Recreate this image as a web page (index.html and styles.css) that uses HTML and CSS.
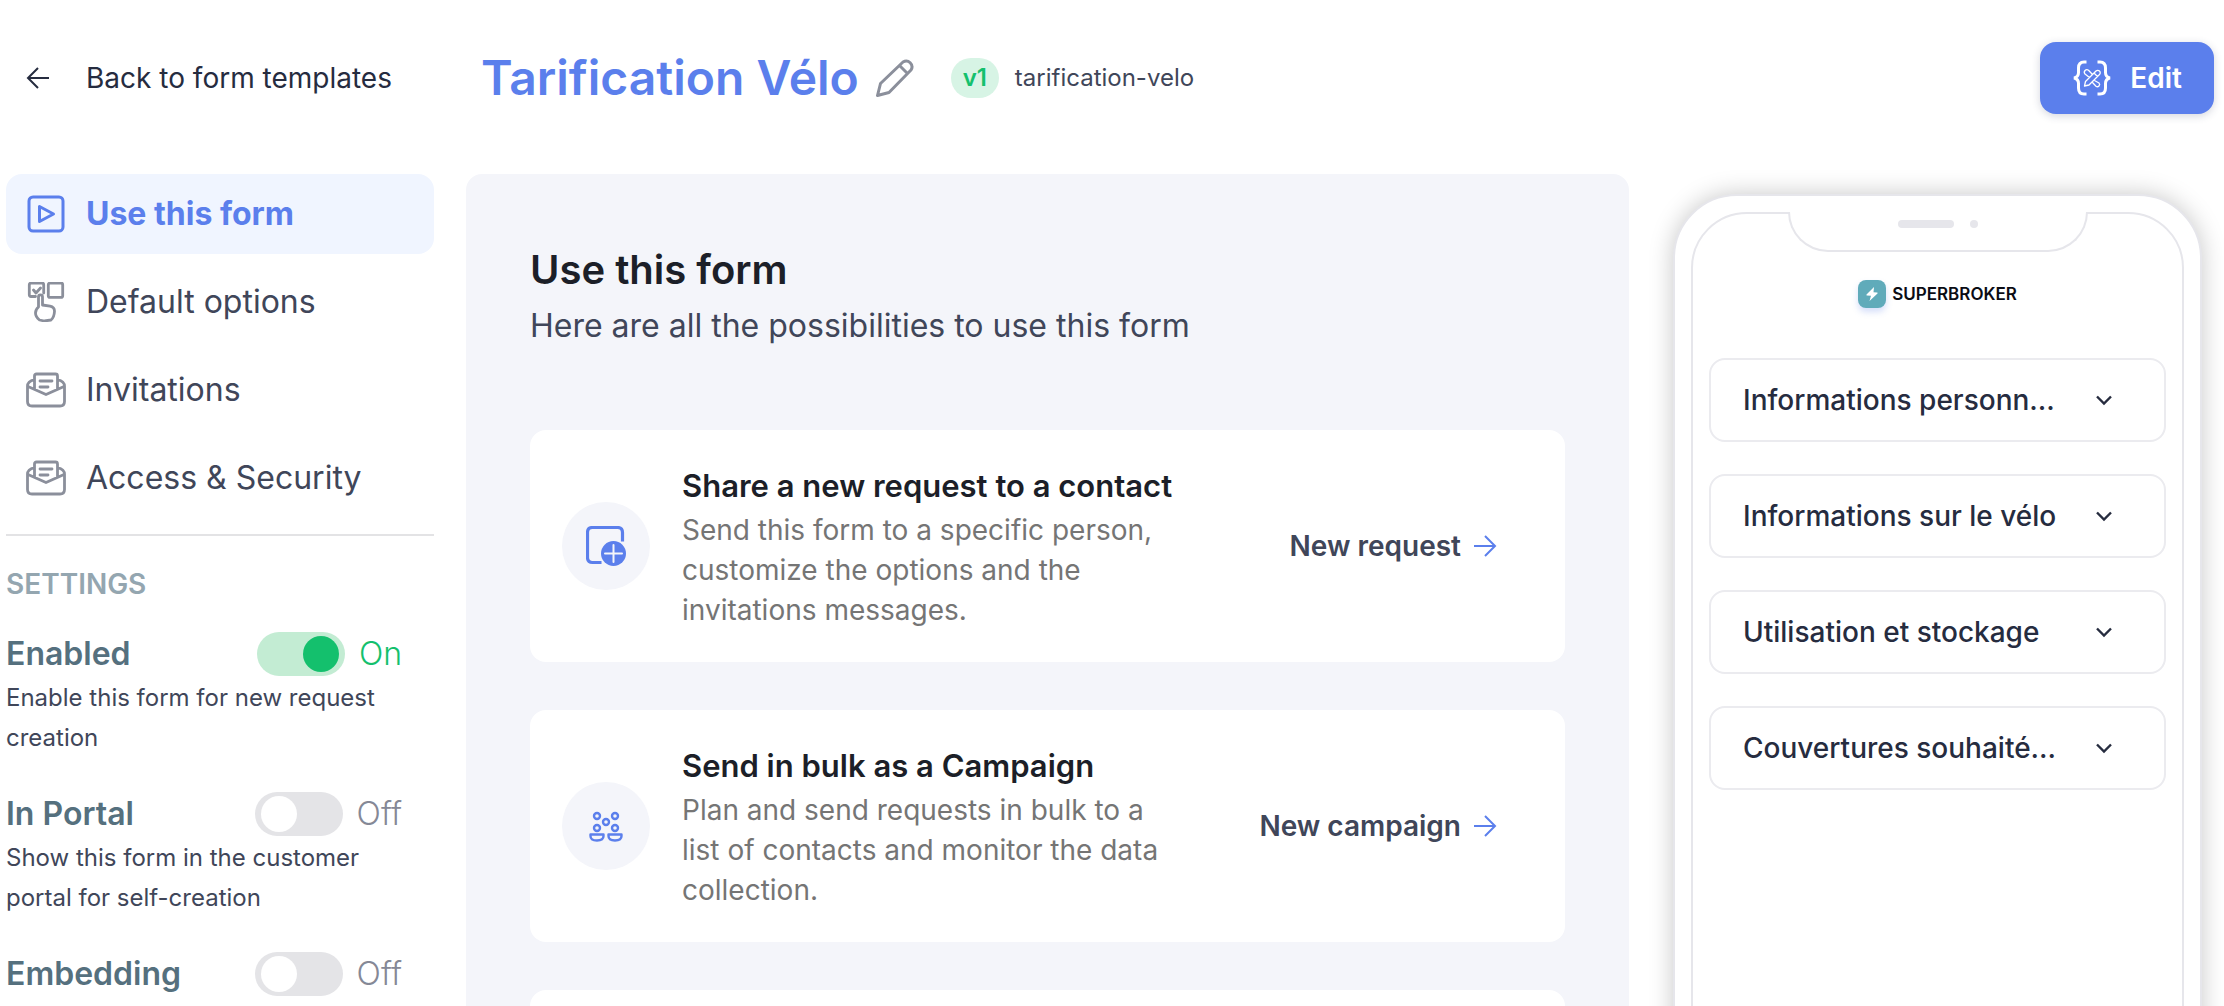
FILE: index.html
```html
<!DOCTYPE html>
<html lang="en">
<head>
<meta charset="utf-8">
<title>Tarification Vélo</title>
<link rel="stylesheet" href="styles.css">
</head>
<body>
<div class="app">
  <header class="header">
    <a class="back" href="#">
      <svg class="back-icon" viewBox="0 0 24 24" fill="none" stroke="currentColor" stroke-width="2"><path d="M23 12H2M12 2 2 12l10 10"/></svg>
      <span>Back to form templates</span>
    </a>
    <div class="heading">
      <h1>Tarification Vélo</h1>
      <button class="rename" aria-label="Rename">
        <svg viewBox="0 0 40 40" fill="none" stroke="currentColor" stroke-width="3" stroke-linejoin="round"><path d="M2.500 37.500 5.500 25.500 28 4a5.800 5.800 0 0 1 8 8L14 34.500ZM24.500 7.500l8 8"/></svg>
      </button>
      <span class="version">v1</span>
      <span class="slug">tarification-velo</span>
    </div>
    <button class="edit">
      <svg viewBox="0 0 40 36" fill="none" stroke="currentColor" stroke-width="3"><path d="M14.500 2H12Q6.500 2 6.500 8v4.500Q6.500 17 2 18q4.500 1 4.500 5.500V28q0 6 5.500 6h2.500M25.500 2H28q5.500 0 5.500 6v4.500Q33.500 17 38 18q-4.500 1-4.500 5.500V28q0 6-5.500 6h-2.500"/><path stroke-width="1.300" stroke-linejoin="round" d="m12.500 26 1-4.500L24 11a2.400 2.400 0 0 1 3.500 3.500L17 25ZM22 13l3.500 3.500M17.500 17.500l-4.500-3.500a2.600 2.600 0 0 1 3.500-3.800l4 4.300M22.500 20.500l4.500 2.500a2.200 2.200 0 0 1-3 3.200l-3.500-3.700"/></svg>
      <span>Edit</span>
    </button>
  </header>

  <div class="columns">
    <aside class="sidebar">
      <nav class="menu">
        <a class="menu-item active" href="#">
          <svg viewBox="0 0 40 40" fill="none" stroke="currentColor" stroke-width="3" stroke-linejoin="round"><rect x="3" y="3" width="34" height="34" rx="4"/><path d="M13.500 12.500v15L27.500 20Z"/></svg>
          <span>Use this form</span>
        </a>
        <a class="menu-item" href="#">
          <svg viewBox="0 0 40 40" fill="none" stroke="currentColor" stroke-width="2.800" stroke-linejoin="round" stroke-linecap="round"><path d="M9.500 14.500H5a1.700 1.700 0 0 1-1.700-1.700V2.700A1.700 1.700 0 0 1 5 1h11a1.700 1.700 0 0 1 1.700 1.700V11"/><rect x="22.300" y="1" width="14.400" height="14.400" rx="1.700"/><path d="m7.500 8 2.500 3 4.500-5M12.500 25V14.800a2 2 0 0 1 4 0v8.200l7.500 1.200q4.500 1 4.500 5-.3 6-3.500 8.800l-6.500 1-5-1q-4-3-4-7 0-3.500 3-6Z"/></svg>
          <span>Default options</span>
        </a>
        <a class="menu-item" href="#">
          <svg viewBox="0 0 40 40" fill="none" stroke="currentColor" stroke-width="2.800" stroke-linejoin="round" stroke-linecap="round"><path d="M8.500 19V6Q8.500 4 10.500 4h19q2 0 2 2v13M8.500 9.500Q1.500 11.500 1.500 16v15.500q0 4.500 4.500 4.500h28q4.500 0 4.500-4.500V16q0-4.500-7-6.500M2 16.500l18 8 18-8M14 11h12M14 17h8"/></svg>
          <span>Invitations</span>
        </a>
        <a class="menu-item" href="#">
          <svg viewBox="0 0 40 40" fill="none" stroke="currentColor" stroke-width="2.800" stroke-linejoin="round" stroke-linecap="round"><path d="M8.500 19V6Q8.500 4 10.500 4h19q2 0 2 2v13M8.500 9.500Q1.500 11.500 1.500 16v15.500q0 4.500 4.500 4.500h28q4.500 0 4.500-4.500V16q0-4.500-7-6.500M2 16.500l18 8 18-8M14 11h12M14 17h8"/></svg>
          <span>Access &amp; Security</span>
        </a>
      </nav>
      <h2 class="settings-title">SETTINGS</h2>
      <div class="setting">
        <div class="setting-row">
          <label for="enabled">Enabled</label>
          <input class="switch" type="checkbox" id="enabled" checked>
          <span class="state on">On</span>
        </div>
        <p>Enable this form for new request creation</p>
      </div>
      <div class="setting">
        <div class="setting-row">
          <label for="portal">In Portal</label>
          <input class="switch" type="checkbox" id="portal">
          <span class="state">Off</span>
        </div>
        <p>Show this form in the customer portal for self-creation</p>
      </div>
      <div class="setting">
        <div class="setting-row">
          <label for="embedding">Embedding</label>
          <input class="switch" type="checkbox" id="embedding">
          <span class="state">Off</span>
        </div>
      </div>
    </aside>

    <main class="panel">
      <h2>Use this form</h2>
      <p class="subtitle">Here are all the possibilities to use this form</p>
      <section class="card">
        <div class="card-icon">
          <svg viewBox="0 0 40 40" fill="none" stroke="currentColor" stroke-width="3.200"><path d="M15.500 36.500H6.500q-5 0-5-5v-25q0-5 5-5h25q5 0 5 5v9"/><circle cx="27.500" cy="27.500" r="12.500" fill="currentColor" stroke="none"/><path stroke="#f4f5fa" stroke-width="2" stroke-linecap="round" d="M27.500 19v17M19 27.500h17"/></svg>
        </div>
        <div class="card-text">
          <h3>Share a new request to a contact</h3>
          <p>Send this form to a specific person, customize the options and the invitations messages.</p>
        </div>
        <a class="action" href="#">New request
          <svg viewBox="0 0 24 24" fill="none" stroke="currentColor" stroke-width="2"><path d="M1 12h20M12 2l10 10-10 10"/></svg>
        </a>
      </section>
      <section class="card">
        <div class="card-icon">
          <svg viewBox="0 0 40 40" fill="none" stroke="currentColor" stroke-width="2.400"><circle cx="11" cy="10" r="3"/><circle cx="29" cy="10" r="3"/><circle cx="20" cy="16" r="3"/><circle cx="11" cy="22" r="3"/><circle cx="29" cy="22" r="3"/><path stroke-linejoin="round" d="M4.500 28.500h13v1.500q0 4.500-6.500 4.500T4.500 30ZM22.500 28.500h13v1.500q0 4.500-6.500 4.500t-6.500-4.500Z"/></svg>
        </div>
        <div class="card-text">
          <h3>Send in bulk as a Campaign</h3>
          <p>Plan and send requests in bulk to a list of contacts and monitor the data collection.</p>
        </div>
        <a class="action" href="#">New campaign
          <svg viewBox="0 0 24 24" fill="none" stroke="currentColor" stroke-width="2"><path d="M1 12h20M12 2l10 10-10 10"/></svg>
        </a>
      </section>
      <section class="card"></section>
    </main>

    <aside class="preview">
      <div class="phone">
        <div class="notch"><span class="speaker"></span><span class="camera"></span></div>
        <div class="screen">
          <div class="brand">
            <span class="brand-mark"><svg viewBox="0 0 16 16" fill="currentColor"><path d="M10 1 2.500 8.500q-.5.800.5 1L7 9.700 5.500 15 13.500 7.500q.5-.8-.5-1L9.500 6.300Z"/></svg></span>
            <span>SUPERBROKER</span>
          </div>
          <button class="step"><span>Informations personn…</span><svg viewBox="0 0 16 16" fill="none" stroke="currentColor" stroke-width="2.400"><path d="m1 4.500 7 7 7-7"/></svg></button>
          <button class="step"><span>Informations sur le vélo</span><svg viewBox="0 0 16 16" fill="none" stroke="currentColor" stroke-width="2.400"><path d="m1 4.500 7 7 7-7"/></svg></button>
          <button class="step"><span>Utilisation et stockage</span><svg viewBox="0 0 16 16" fill="none" stroke="currentColor" stroke-width="2.400"><path d="m1 4.500 7 7 7-7"/></svg></button>
          <button class="step"><span>Couvertures souhaité…</span><svg viewBox="0 0 16 16" fill="none" stroke="currentColor" stroke-width="2.400"><path d="m1 4.500 7 7 7-7"/></svg></button>
        </div>
      </div>
    </aside>
  </div>
</div>
</body>
</html>
```

FILE: styles.css
```css
* {
  box-sizing: border-box;
}

body {
  margin: 0;
  background: #fff;
  color: #404659;
  font-family: Inter, "Liberation Sans", sans-serif;
  font-size: 28px;
  line-height: 40px;
}

h1, h2, h3, p {
  margin: 0;
}

a {
  color: inherit;
  text-decoration: none;
}

button {
  font: inherit;
  border: 0;
  padding: 0;
  background: none;
  cursor: pointer;
}

.app {
  height: 100vh;
  overflow: hidden;
  display: flex;
  flex-direction: column;
  padding: 0 10px 0 6px;
}

/* Header */
.header {
  display: flex;
  align-items: center;
  padding: 42px 0 60px;
}

.back {
  display: flex;
  align-items: center;
  gap: 36px;
  width: 428px;
  padding-left: 20px;
  color: #262c3f;
}

.back-icon {
  width: 24px;
  height: 24px;
}

.heading {
  flex: 1;
  display: flex;
  align-items: center;
  padding-left: 47px;
}

.heading h1 {
  color: #5b7fec;
  font-size: 48px;
  font-weight: 600;
  line-height: 56px;
}

.rename {
  width: 40px;
  height: 40px;
  margin: 0 36px 0 16px;
  color: #8b8f9b;
}

.version {
  min-width: 48px;
  margin-right: 16px;
  border-radius: 20px;
  background: #d7f4e5;
  color: #14c06d;
  font-size: 24px;
  font-weight: 600;
  text-align: center;
}

.slug {
  font-size: 24px;
}

.edit {
  display: flex;
  align-items: center;
  gap: 18px;
  height: 72px;
  padding: 0 32px;
  border-radius: 16px;
  background: #5b7fec;
  color: #fff;
  font-weight: 600;
  box-shadow: 0 2px 8px rgba(40, 50, 90, .2);
}

.edit svg {
  width: 40px;
  height: 36px;
}

.columns {
  flex: 1;
  min-height: 0;
  display: grid;
  grid-template-columns: 428px minmax(0, 1fr) 553px;
  gap: 32px;
}

/* Sidebar */
.menu {
  display: flex;
  flex-direction: column;
  gap: 8px;
  padding-bottom: 16px;
  border-bottom: 2px solid #e3e3e5;
}

.menu-item {
  display: flex;
  align-items: center;
  gap: 20px;
  height: 80px;
  padding: 0 20px;
  border-radius: 16px;
  font-size: 32px;
}

.menu-item svg {
  width: 40px;
  height: 40px;
  color: #8b8f9b;
}

.menu-item.active,
.menu-item.active svg {
  background: #f0f5ff;
  color: #5b7fec;
  font-weight: 700;
}

.settings-title {
  margin: 28px 0 26px;
  color: #94a6b0;
  font-size: 28px;
  font-weight: 600;
}

.setting {
  margin-bottom: 32px;
  padding-right: 32px;
}

.setting-row {
  display: flex;
  align-items: center;
  height: 48px;
}

.setting label {
  flex: 1;
  color: #55707e;
  font-size: 32px;
  font-weight: 600;
}

.setting p {
  font-size: 24px;
}

.switch {
  appearance: none;
  display: flex;
  align-items: center;
  width: 88px;
  height: 44px;
  margin: 0 14px 0 0;
  padding: 0 6px;
  border-radius: 22px;
  background: #e4e4e7;
}

.switch::before {
  content: "";
  width: 36px;
  height: 36px;
  border-radius: 50%;
  background: #fff;
}

.switch:checked {
  justify-content: flex-end;
  background: #c3ecd3;
}

.switch:checked::before {
  background: #14c06d;
}

.state {
  color: #858896;
  font-size: 32px;
  font-weight: 300;
}

.state.on {
  color: #14c06d;
}

/* Main panel */
.panel {
  display: flex;
  flex-direction: column;
  overflow: hidden;
  padding: 72px 64px 0;
  border-radius: 16px 16px 0 0;
  background: #f4f5fa;
}

.panel h2 {
  color: #1c1f28;
  font-size: 40px;
  font-weight: 600;
  line-height: 48px;
}

.subtitle {
  margin: 8px 0 80px;
  font-size: 32px;
  line-height: 48px;
}

.card {
  flex-shrink: 0;
  display: flex;
  align-items: center;
  gap: 32px;
  min-height: 232px;
  margin-bottom: 48px;
  padding: 32px 68px 32px 32px;
  border-radius: 16px;
  background: #fff;
}

.card-icon {
  flex-shrink: 0;
  display: grid;
  place-items: center;
  width: 88px;
  height: 88px;
  border-radius: 50%;
  background: #f4f5fa;
  color: #5b7fec;
}

.card-icon svg {
  width: 40px;
  height: 40px;
}

.card-text {
  flex: 0 1 500px;
}

.card-text h3 {
  color: #1c1f28;
  font-size: 31px;
  font-weight: 600;
  line-height: 48px;
}

.card-text p {
  color: #757575;
}

.action {
  display: flex;
  align-items: center;
  gap: 12px;
  margin-left: auto;
  font-weight: 600;
  white-space: nowrap;
}

.action svg {
  width: 24px;
  height: 24px;
  color: #5b7fec;
}

/* Phone preview */
.preview {
  padding: 20px 12px 0;
}

.phone {
  position: relative;
  height: 1060px;
  padding: 16px;
  border: 2px solid #e6e6eb;
  border-radius: 64px;
  background: #fff;
  box-shadow: 0 0 24px rgba(0, 0, 0, .22);
}

.screen {
  display: flex;
  flex-direction: column;
  gap: 32px;
  height: 100%;
  padding: 66px 16px;
  border: 2px solid #e6e6eb;
  border-radius: 56px;
}

/* The notch hangs over the top edge of the screen */
.notch {
  position: absolute;
  top: 16px;
  left: 50%;
  display: flex;
  justify-content: center;
  gap: 16px;
  width: 300px;
  height: 40px;
  margin-left: -150px;
  padding: 8px 0 0;
  border: solid #e6e6eb;
  border-width: 0 2px 2px;
  border-radius: 0 0 40px 40px;
  background: #fff;
}

.speaker {
  width: 56px;
  height: 8px;
  border-radius: 4px;
  background: #e6e6eb;
}

.camera {
  width: 8px;
  height: 8px;
  border-radius: 50%;
  background: #e6e6eb;
}

.brand {
  display: flex;
  align-items: center;
  justify-content: center;
  gap: 6px;
  height: 28px;
  margin-bottom: 18px;
  color: #0b0c14;
  font-size: 17px;
  font-weight: 600;
}

.brand-mark {
  display: grid;
  place-items: center;
  width: 28px;
  height: 28px;
  border-radius: 8px;
  background: #60abba;
  color: #fff;
  box-shadow: 0 4px 6px rgba(91, 127, 236, .25);
}

.brand-mark svg {
  width: 16px;
  height: 16px;
}

.step {
  display: flex;
  align-items: center;
  justify-content: space-between;
  height: 84px;
  padding: 0 52px 0 32px;
  border: 2px solid #ebebef;
  border-radius: 16px;
  color: #262c3f;
  font-weight: 500;
}

.step svg {
  width: 16px;
  height: 16px;
}
```
